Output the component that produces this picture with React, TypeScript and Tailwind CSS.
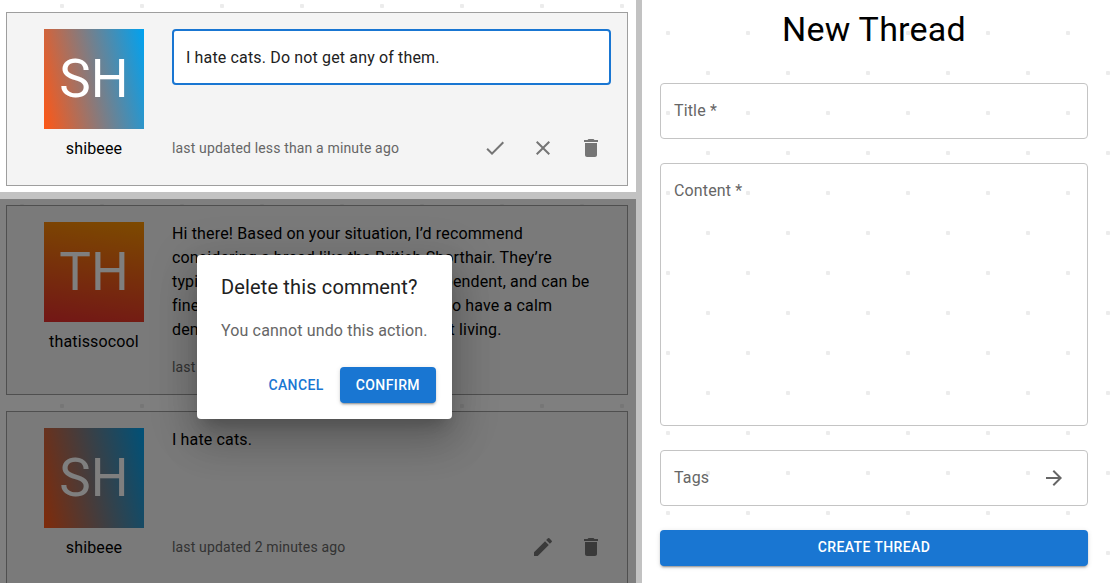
import React from "react";

const leftDotImage =
  "bg-[radial-gradient(circle,#ececec_0,#ececec_2px,transparent_2.5px),radial-gradient(circle,#ececec_0,#ececec_2px,transparent_2.5px)] bg-[length:80px_80px]";

function Check() {
  return (
    <svg width="24" height="24" viewBox="0 0 24 24" fill="currentColor">
      <path d="M9 16.17 4.83 12l-1.42 1.41L9 19 21 7l-1.41-1.41z" />
    </svg>
  );
}
function Close() {
  return (
    <svg width="24" height="24" viewBox="0 0 24 24" fill="currentColor">
      <path d="M19 6.41 17.59 5 12 10.59 6.41 5 5 6.41 10.59 12 5 17.59 6.41 19 12 13.41 17.59 19 19 17.59 13.41 12z" />
    </svg>
  );
}
function Trash() {
  return (
    <svg width="24" height="24" viewBox="0 0 24 24" fill="currentColor">
      <path d="M6 19c0 1.1.9 2 2 2h8c1.1 0 2-.9 2-2V7H6v12zM19 4h-3.5l-1-1h-5l-1 1H5v2h14V4z" />
    </svg>
  );
}
function Pencil() {
  return (
    <svg width="24" height="24" viewBox="0 0 24 24" fill="currentColor">
      <path d="M3 17.25V21h3.75L17.81 9.94l-3.75-3.75L3 17.25zM20.71 7.04c.39-.39.39-1.02 0-1.41l-2.34-2.34a.9959.9959 0 0 0-1.41 0l-1.83 1.83 3.75 3.75 1.83-1.83z" />
    </svg>
  );
}
function ArrowRight() {
  return (
    <svg width="24" height="24" viewBox="0 0 24 24" fill="currentColor">
      <path d="m12 4-1.41 1.41L16.17 11H4v2h12.17l-5.58 5.59L12 20l8-8z" />
    </svg>
  );
}

function Avatar({ initials, name, gradient }: { initials: string; name: string; gradient: string }) {
  return (
    <div className="flex w-[100px] flex-col items-center shrink-0">
      <div className={`flex h-[100px] w-[100px] items-center justify-center pt-[2px] text-[53px] text-white ${gradient}`}>
        {initials}
      </div>
      <div className="mt-[8px] h-[24px] whitespace-nowrap text-[16px] leading-[24px] tracking-[0.15px] text-black">{name}</div>
    </div>
  );
}

function IconBtn({ children }: { children: React.ReactNode }) {
  return <div className="flex h-[40px] w-[40px] items-center justify-center text-[#757575]">{children}</div>;
}

function Card({
  initials,
  name,
  gradient,
  updated,
  height,
  children,
  actions,
}: {
  initials: string;
  name: string;
  gradient: string;
  updated: string;
  height: string;
  children: React.ReactNode;
  actions?: React.ReactNode;
}) {
  return (
    <div className={`ml-[6px] mr-[8px] flex border border-[#9e9e9e] bg-[#f4f4f4] pl-[37px] pr-[16px] pt-[16px] ${height}`}>
      <Avatar initials={initials} name={name} gradient={gradient} />
      <div className="ml-[28px] flex min-w-0 flex-1 flex-col">
        <div className="min-h-[99px]">{children}</div>
        <div className="flex h-[40px] shrink-0 items-center justify-between">
          <span className="whitespace-nowrap text-[14px] tracking-[0.15px] text-[#666]">{updated}</span>
          <div className="flex gap-[8px]">{actions}</div>
        </div>
      </div>
    </div>
  );
}

export default function App() {
  return (
    <div className="flex h-[583px] w-[1111px] overflow-hidden bg-white font-['Roboto',sans-serif]">
      <div className="flex h-full w-[636px] shrink-0 flex-col">
        <div className={`h-[192px] shrink-0 pt-[12px] ${leftDotImage} bg-[position:22px_-34px,-18px_6px]`}>
          <Card
            initials="SH"
            name="shibeee"
            gradient="bg-[linear-gradient(78deg,#fe5716_0%,#00a2f0_100%)]"
            updated="last updated less than a minute ago"
            height="h-[174px]"
            actions={
              <>
                <IconBtn><Check /></IconBtn>
                <IconBtn><Close /></IconBtn>
                <IconBtn><Trash /></IconBtn>
              </>
            }
          >
            <div className="flex h-[56px] items-center rounded-[4px] border-2 border-[#1976d2] bg-white px-[12px] pt-[1px] text-[16px] tracking-[0.15px] text-[#212121]">
              I hate cats. Do not get any of them.
            </div>
          </Card>
        </div>
        <div className="h-[7px] shrink-0 bg-[#c2c2c2]" />
        <div className="relative min-h-0 flex-1 overflow-hidden bg-white pt-[6px]">
          <div className={`absolute inset-0 ${leftDotImage} bg-[position:22px_7px,-18px_-33px]`} />
          <div className="relative flex flex-col gap-[16px]">
            <Card
              initials="TH"
              name="thatissocool"
              gradient="bg-[linear-gradient(8deg,#e52d2d_0%,#fa9400_100%)]"
              updated="last updated 5 minutes ago"
              height="h-[190px]"
            >
              <p className="mb-[5px] text-[16px] leading-[24px] tracking-[0.15px] text-black">
                Hi there! Based on your situation, I’d recommend considering a breed like the British Shorthair. They’re
                typically low-maintenance, pretty independent, and can be fine if left alone for long days. They also have a calm
                demeanor, making them perfect for flat living.
              </p>
            </Card>
            <Card
              initials="SH"
              name="shibeee"
              gradient="bg-[linear-gradient(78deg,#fe5716_0%,#00a2f0_100%)]"
              updated="last updated 2 minutes ago"
              height="h-[190px]"
              actions={
                <>
                  <IconBtn><Pencil /></IconBtn>
                  <IconBtn><Trash /></IconBtn>
                </>
              }
            >
              <p className="text-[16px] leading-[24px] tracking-[0.15px] text-black">I hate cats.</p>
            </Card>
          </div>
          <div className="absolute inset-0 bg-black/50" />
          <div className="absolute left-[197px] top-[56px] h-[164px] w-[255px] rounded-[4px] bg-white px-[24px] pt-[16px] shadow-[0_11px_15px_-7px_rgba(0,0,0,0.2),0_24px_38px_3px_rgba(0,0,0,0.14),0_9px_46px_8px_rgba(0,0,0,0.12)]">
            <h2 className="text-[20px] leading-[32px] tracking-[0.15px] text-[#212121]">Delete this comment?</h2>
            <p className="mt-[16px] whitespace-nowrap text-[16px] leading-[24px] tracking-[0.15px] text-[#666]">You cannot undo this action.</p>
            <div className="absolute bottom-[16px] right-[16px] flex items-center gap-[8px]">
              <span className="px-[8px] text-[14px] font-medium tracking-[0.4px] text-[#1976d2]">CANCEL</span>
              <span className="flex h-[36px] items-center rounded-[4px] bg-[#1976d2] px-[16px] text-[14px] font-medium tracking-[0.4px] text-white shadow-[0_3px_1px_-2px_rgba(0,0,0,0.2),0_2px_2px_0_rgba(0,0,0,0.14),0_1px_5px_0_rgba(0,0,0,0.12)]">
                CONFIRM
              </span>
            </div>
          </div>
        </div>
      </div>
      <div className="w-[6px] shrink-0 bg-[#c2c2c2]" />
      <div className="min-w-0 flex-1 bg-white bg-[radial-gradient(circle,#ececec_0,#ececec_2px,transparent_2.5px),radial-gradient(circle,#ececec_0,#ececec_2px,transparent_2.5px)] bg-[length:80px_80px] bg-[position:-14px_-7px,26px_33px] pl-[18px] pr-[23px]">
        <h1 className="mt-[4px] h-[50px] text-center text-[34px] leading-[50px] tracking-[0.25px] text-black">New Thread</h1>
        <div className="mt-[29px] flex h-[56px] items-center rounded-[4px] border border-[#c4c4c4] px-[13px] text-[16px] tracking-[0.15px] text-[#666]">
          Title *
        </div>
        <div className="mt-[24px] h-[263px] rounded-[4px] border border-[#c4c4c4] px-[13px] pt-[15px] text-[16px] leading-[24px] tracking-[0.15px] text-[#666]">
          Content *
        </div>
        <div className="mt-[24px] flex h-[56px] items-center justify-between rounded-[4px] border border-[#c4c4c4] pl-[13px] pr-[21px] text-[16px] tracking-[0.15px] text-[#666]">
          <span>Tags</span>
          <ArrowRight />
        </div>
        <div className="mt-[24px] flex h-[36px] items-center justify-center rounded-[4px] bg-[#1976d2] pb-[1px] text-[14px] font-medium tracking-[0.4px] text-white shadow-[0_3px_1px_-2px_rgba(0,0,0,0.2),0_2px_2px_0_rgba(0,0,0,0.14),0_1px_5px_0_rgba(0,0,0,0.12)]">
          CREATE THREAD
        </div>
      </div>
    </div>
  );
}
